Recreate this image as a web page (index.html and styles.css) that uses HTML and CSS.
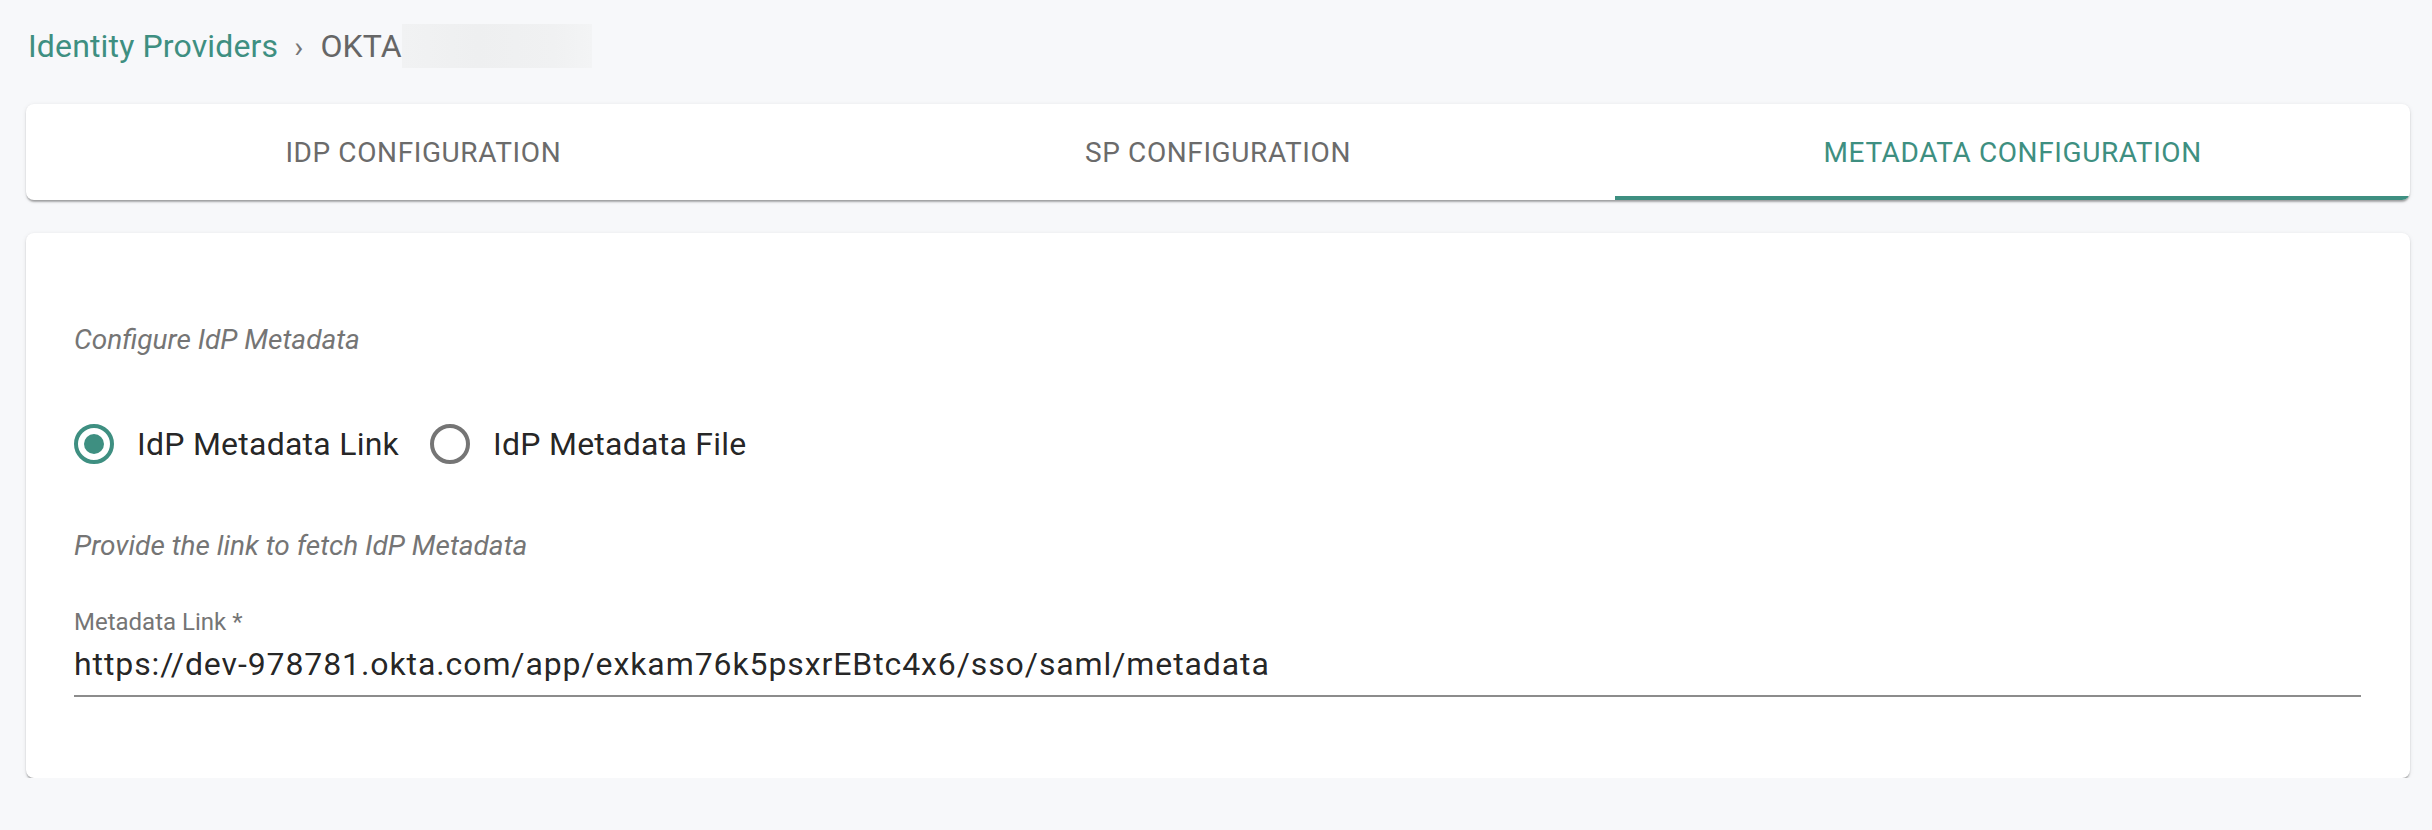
FILE: index.html
```html
<!DOCTYPE html>
<html lang="en">
<head>
    <meta charset="UTF-8">
    <meta name="viewport" content="width=device-width, initial-scale=1.0">
    <title>Identity Providers - OKTA</title>
    <link rel="stylesheet" href="styles.css">
</head>
<body>
    <main class="page">
        <nav class="breadcrumb">
            <a class="crumb-link" href="#">Identity Providers</a>
            <span class="crumb-sep">›</span>
            <span class="crumb-current">OKTA</span>
            <span class="crumb-blur"></span>
        </nav>

        <div class="tabs">
            <button class="tab">IDP CONFIGURATION</button>
            <button class="tab">SP CONFIGURATION</button>
            <button class="tab active">METADATA CONFIGURATION</button>
        </div>

        <section class="card">
            <p class="hint">Configure IdP Metadata</p>

            <div class="radio-group">
                <label class="radio-item">
                    <span class="radio checked"></span>
                    <span class="radio-label">IdP Metadata Link</span>
                </label>
                <label class="radio-item">
                    <span class="radio"></span>
                    <span class="radio-label">IdP Metadata File</span>
                </label>
            </div>

            <p class="hint hint-link">Provide the link to fetch IdP Metadata</p>

            <div class="field">
                <label class="field-label">Metadata Link *</label>
                <div class="field-input">https://dev-978781.okta.com/app/exkam76k5psxrEBtc4x6/sso/saml/metadata</div>
            </div>
        </section>
    </main>
</body>
</html>
```

FILE: styles.css
```css
*{
    margin: 0;
    padding: 0;
    box-sizing: border-box;
}

body{
    background-color: #f7f8fa;
    font-family: Roboto, "Liberation Sans", sans-serif;
    color: rgba(0, 0, 0, 0.87);
    letter-spacing: 0.3px;
}

.page{
    padding: 22px 22px 0 26px;
}

/* breadcrumb */
.breadcrumb{
    display: flex;
    align-items: center;
    height: 48px;
    font-size: 32px;
    letter-spacing: 0.15px;
    padding-left: 2px;
}
.crumb-link{
    color: #3e8f81;
    text-decoration: none;
}
.crumb-sep{
    color: #757575;
    margin: 0 17px 0 16px;
    font-size: 30px;
}
.crumb-current{
    color: #666666;
}
.crumb-blur{
    display: inline-block;
    width: 190px;
    height: 44px;
    background: linear-gradient(90deg, #f1f2f3, #eeeff0 40%, #f0f1f2 80%, #f3f4f5);
}

/* tabs */
.tabs{
    margin-top: 34px;
    display: flex;
    height: 96px;
    background: #ffffff;
    border-radius: 8px;
    overflow: hidden;
    box-shadow: 0 3px 2px -1px rgba(0, 0, 0, 0.25), 0 1px 2px 0 rgba(0, 0, 0, 0.12), 0 1px 5px 0 rgba(0, 0, 0, 0.08);
}
.tab{
    flex: 1;
    border: none;
    background: none;
    font-family: Roboto, "Liberation Sans", sans-serif;
    font-size: 28px;
    font-weight: 400;
    letter-spacing: 0.6px;
    color: #6b6b6b;
    border-bottom: 4px solid transparent;
    padding-top: 4px;
}
.tab.active{
    color: #3e8f81;
    border-bottom-color: #3e8f81;
}

/* card */
.card{
    margin-top: 33px;
    background: #ffffff;
    border-radius: 8px;
    padding: 87px 49px 81px 48px;
    box-shadow: 0 3px 2px -1px rgba(0, 0, 0, 0.25), 0 1px 2px 0 rgba(0, 0, 0, 0.12), 0 1px 5px 0 rgba(0, 0, 0, 0.08);
}
.hint{
    font-size: 28px;
    line-height: 40px;
    font-style: italic;
    letter-spacing: 0;
    color: #757575;
}
.hint-link{
    margin-top: 58px;
}

.radio-group{
    margin-top: 60px;
    display: flex;
    align-items: center;
    height: 48px;
    gap: 31px;
}
.radio-item{
    display: flex;
    align-items: center;
    gap: 23px;
}
.radio{
    width: 40px;
    height: 40px;
    border-radius: 50%;
    border: 4px solid #757575;
    display: flex;
    justify-content: center;
    align-items: center;
}
.radio.checked{
    border-color: #3e8f81;
}
.radio.checked::after{
    content: "";
    width: 20px;
    height: 20px;
    border-radius: 50%;
    background: #3e8f81;
}
.radio-label{
    font-size: 32px;
    letter-spacing: 0.25px;
    color: rgba(0, 0, 0, 0.87);
}

.field{
    margin-top: 40px;
}
.field-label{
    display: block;
    font-size: 24px;
    line-height: 32px;
    letter-spacing: 0;
    color: #757575;
}
.field-input{
    margin-top: 2px;
    font-size: 32px;
    line-height: 48px;
    letter-spacing: 0.9px;
    padding-bottom: 7px;
    border-bottom: 2px solid #8c8c8c;
    color: rgba(0, 0, 0, 0.87);
}
```
